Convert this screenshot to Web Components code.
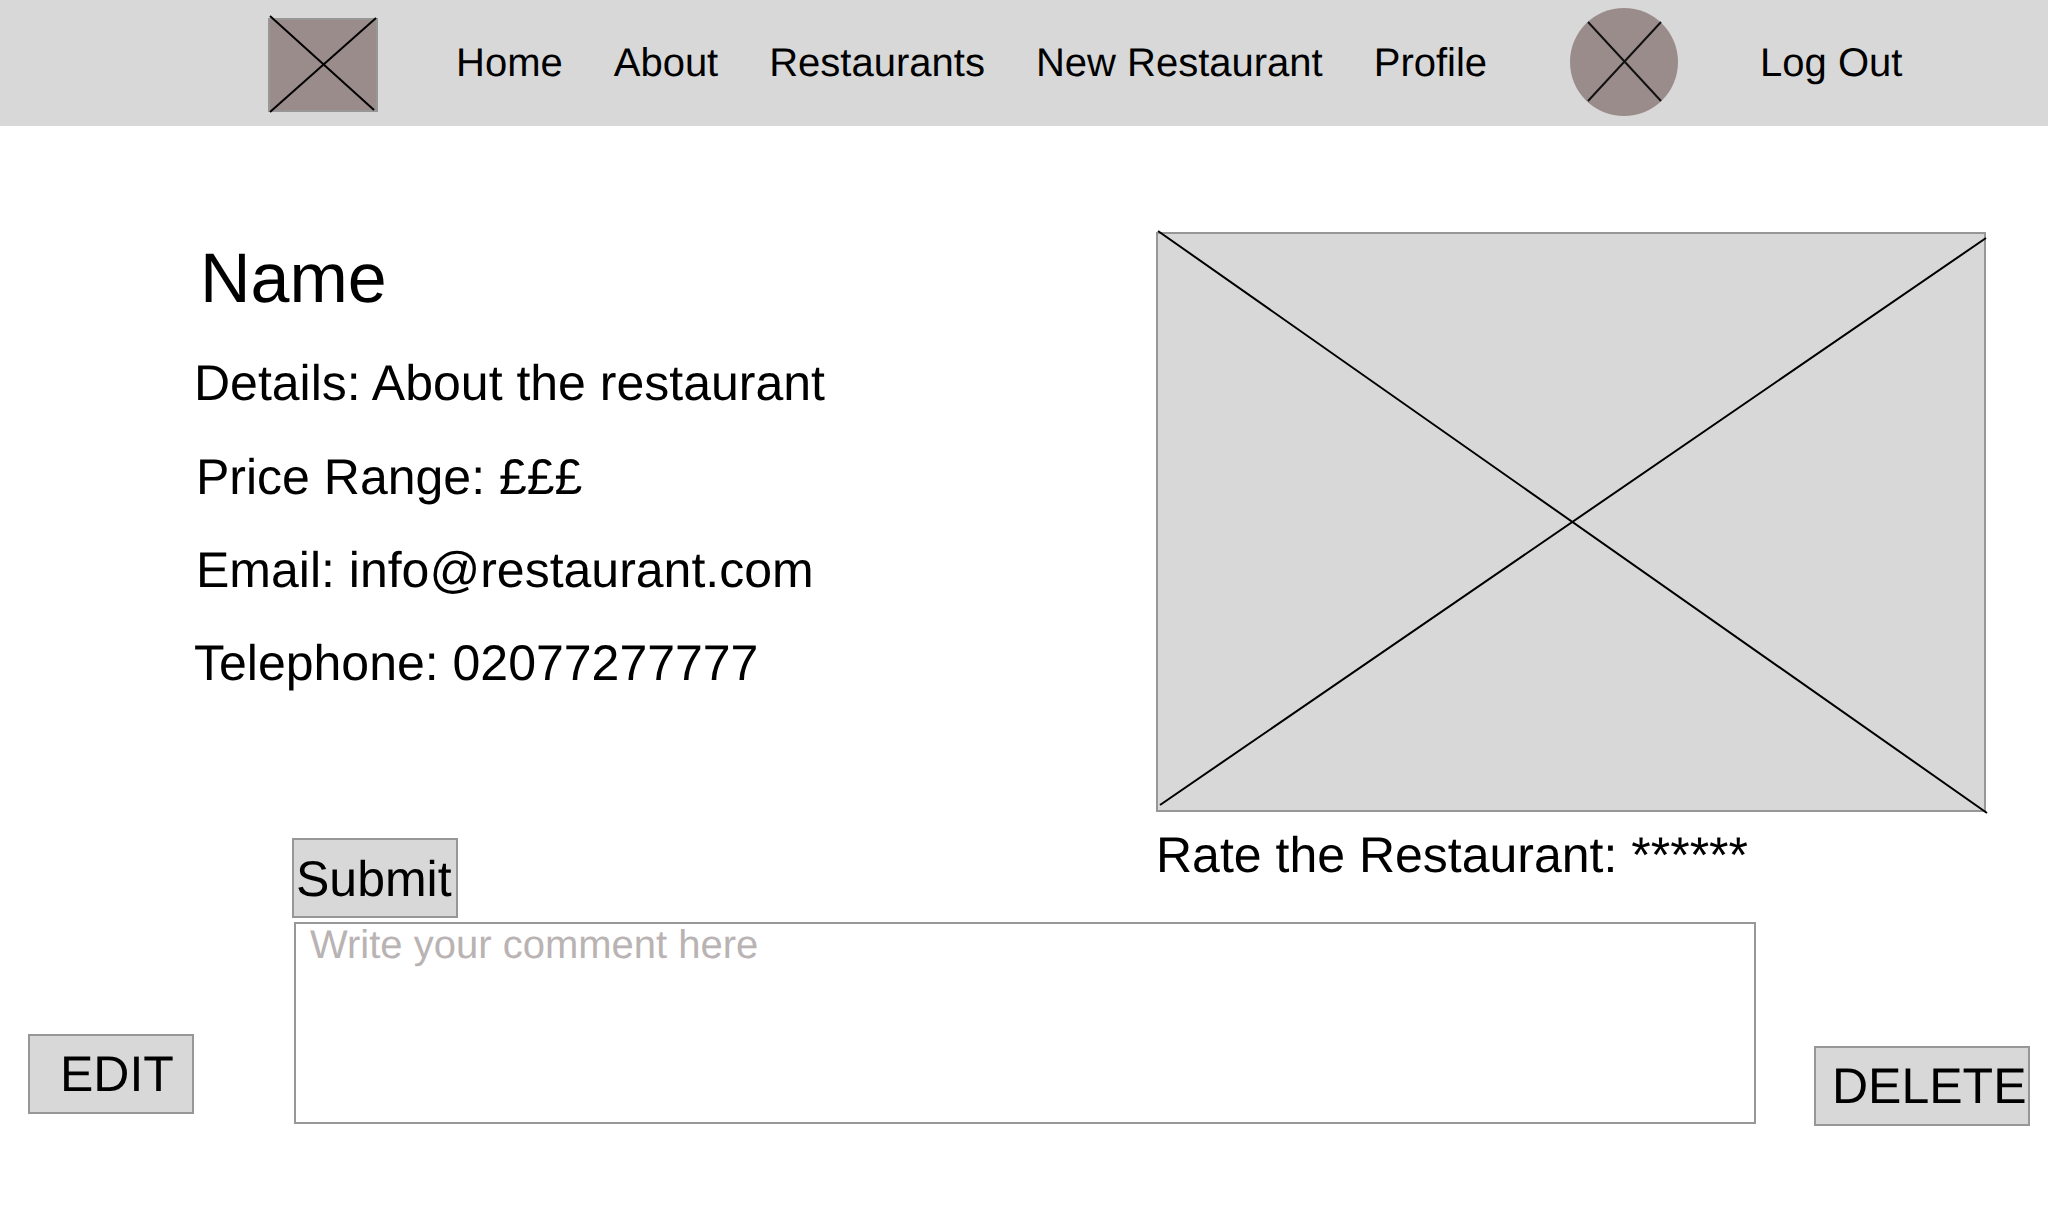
<!DOCTYPE html>
<html lang="en"><head><meta charset="utf-8"><title>Restaurant</title>
<style>
html,body{margin:0;padding:0;background:#fff}
body{width:2048px;height:1206px;overflow:hidden;font-family:"Liberation Sans",Arial,sans-serif;color:#000;text-rendering:geometricPrecision}
</style></head><body>
<app-page></app-page>
<template id="t-nav"><style>
:host{display:flex;align-items:center;height:126px;background:#d8d8d8;box-sizing:border-box;padding-left:268px;font-size:40px;line-height:46px}
svg{display:block;overflow:visible;flex:none}
nav{display:flex;gap:51px;margin-left:78px;margin-top:-1px}
a{color:#000;text-decoration:none}
.logo{width:110px;height:94px;margin-top:4px}
.avatar{width:108px;height:108px;margin-left:83px;margin-top:-2px}
.out{margin-left:82px;margin-top:-1px}
</style>
<svg class="logo" viewBox="0 0 110 94"><rect x="1" y="1" width="108" height="92" fill="#9b8c8c" stroke="#979797" stroke-width="2"/><path d="M2 -2 L106 92 M108 0 L2 94" stroke="#000" stroke-width="2" fill="none"/></svg>
<nav><a>Home</a><a>About</a><a>Restaurants</a><a>New Restaurant</a><a>Profile</a></nav>
<svg class="avatar" viewBox="0 0 108 108"><circle cx="54" cy="54" r="54" fill="#9b8c8c"/><path d="M18 14 L91 93 M91 14 L18 93" stroke="#111" stroke-width="2" fill="none"/></svg>
<a class="out">Log Out</a>
</template>
<template id="t-ph"><style>
:host{display:block;position:relative;box-sizing:border-box;width:830px;height:580px;background:#d8d8d8;border:2px solid #979797}
svg{position:absolute;left:-2px;top:-2px;width:830px;height:580px;overflow:visible}
</style><svg viewBox="0 0 830 580"><path d="M2 -1 L831 581 M830 6 L4 573" stroke="#000" stroke-width="2" fill="none"/></svg></template>
<template id="t-btn"><style>
:host{display:flex;align-items:center;box-sizing:border-box;height:80px;background:#d8d8d8;border:2px solid #979797;font-size:50px;line-height:58px;white-space:nowrap;overflow:visible}
</style><slot></slot></template>
<template id="t-info"><style>
:host{display:block;font-size:50px;line-height:58px;white-space:nowrap}
</style><slot></slot></template>
<template id="t-comment"><style>
:host{display:block;box-sizing:border-box;width:1462px;height:202px;border:2px solid #979797;padding:0 14px;font-size:40px;line-height:42px;color:#b9b3b3;background:#fff}
</style><slot></slot></template>
<template id="t-page"><style>
:host{display:block}
.top{display:flex;height:712px}
.details{width:1156px;flex:none;padding:112px 0 0 194px;box-sizing:border-box}
h1{font-weight:400;font-size:70px;line-height:80px;margin:0 0 0 6px}
.details info-row{margin-top:35px}
.details h1+info-row{margin-top:36px}
.details h1+info-row+info-row{margin-top:36px}
.figure{padding-top:106px}
.mid{display:flex;height:84px;align-items:flex-start}
.submit{margin-left:292px;width:166px;padding:2px 0 0 2px}
.rate{margin-left:698px;margin-top:-12px}
.bot{display:flex;align-items:flex-start}
.edit{margin:112px 0 0 28px;width:166px;padding-left:30px}
comment-box{margin-left:100px}
.del{margin:124px 0 0 58px;width:216px;padding-left:16px}
</style>
<app-nav></app-nav>
<div class="top">
<div class="details"><h1>Name</h1>
<info-row>Details: About the restaurant</info-row>
<info-row style="margin-left:2px">Price Range: £££</info-row>
<info-row style="margin-left:2px">Email: info@restaurant.com</info-row>
<info-row>Telephone: 02077277777</info-row></div>
<div class="figure"><image-placeholder></image-placeholder></div>
</div>
<div class="mid"><action-button class="submit">Submit</action-button><info-row class="rate">Rate the Restaurant: ******</info-row></div>
<div class="bot"><action-button class="edit">EDIT</action-button><comment-box>Write your comment here</comment-box><action-button class="del">DELETE</action-button></div>
</template>
<script>
const def=(name,id)=>customElements.define(name,class extends HTMLElement{constructor(){super();this.attachShadow({mode:"open"}).appendChild(document.getElementById(id).content.cloneNode(true));}});
def("app-nav","t-nav");def("image-placeholder","t-ph");def("action-button","t-btn");def("info-row","t-info");def("comment-box","t-comment");def("app-page","t-page");
</script>
</body></html>
